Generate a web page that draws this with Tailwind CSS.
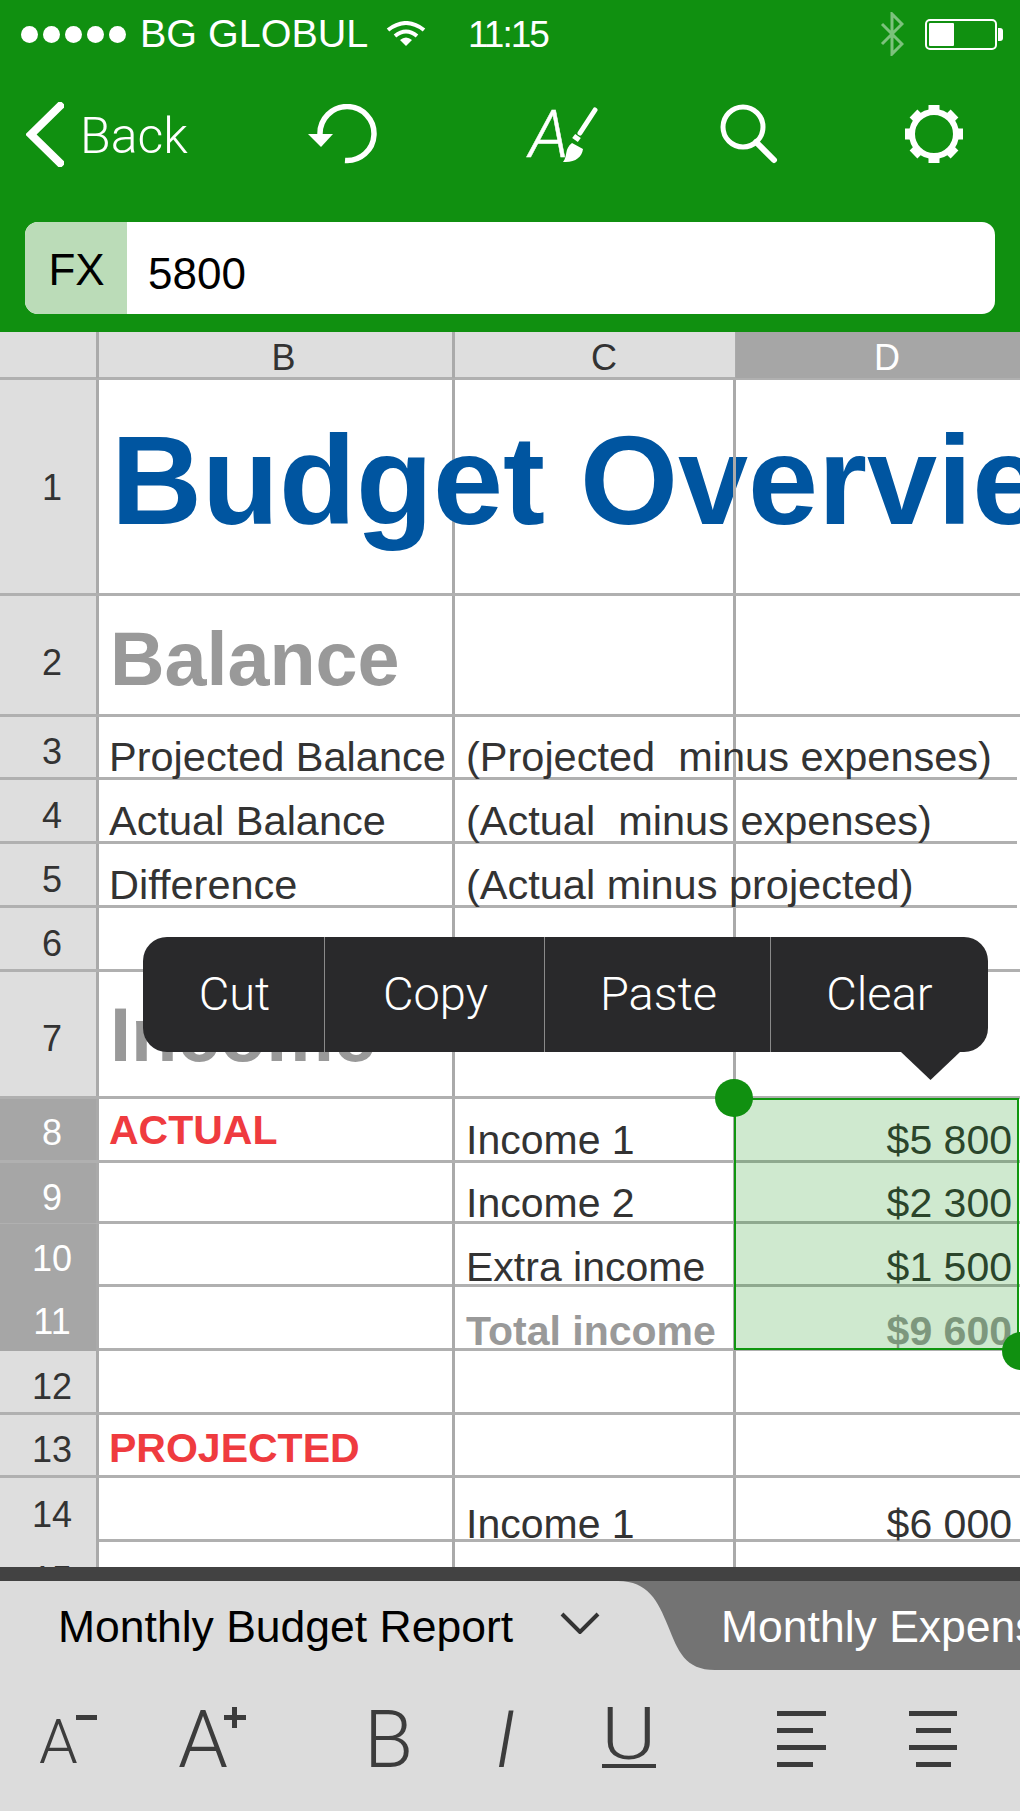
<!DOCTYPE html>
<html>
<head>
<meta charset="utf-8">
<script src="https://cdn.jsdelivr.net/npm/@tailwindcss/browser@4"></script>
</head>
<body class="m-0 bg-white">
<div class="relative w-[1020px] h-[1811px] overflow-hidden font-['Liberation_Sans',sans-serif] text-[#333]">

  <!-- green header -->
  <header class="h-[332px] bg-[#109010] flex flex-col text-white">
    <div class="h-[68px] flex items-center pl-[21px] pr-[23px]">
      <div class="flex gap-[5px]">
        <span class="w-[17px] h-[17px] rounded-full bg-white"></span>
        <span class="w-[17px] h-[17px] rounded-full bg-white"></span>
        <span class="w-[17px] h-[17px] rounded-full bg-white"></span>
        <span class="w-[17px] h-[17px] rounded-full bg-white"></span>
        <span class="w-[17px] h-[17px] rounded-full bg-white"></span>
      </div>
      <span class="ml-[14px] w-[246px] text-[39.5px] leading-none whitespace-nowrap">BG GLOBUL</span>
      <svg class="w-[40px] h-[26px]" viewBox="0 0 40 26" fill="none" stroke="white" stroke-width="4">
        <path d="M2 9 Q20 -5 38 9"/><path d="M9 15 Q20 6 31 15"/><path d="M20 25 L14 19 Q20 14 26 19 Z" fill="white" stroke="none"/>
      </svg>
      <span class="ml-[42px] text-[37px] tracking-[-2px] leading-none whitespace-nowrap">11:15</span>
      <svg class="ml-auto w-[24px] h-[44px] opacity-45" viewBox="0 0 24 44" fill="none" stroke="white" stroke-width="3">
        <path d="M2 12 L22 32 L12 42 L12 2 L22 12 L2 32"/>
      </svg>
      <div class="ml-[21px] w-[72px] h-[31px] border-2 border-white rounded-[5px] p-[2px] relative">
        <div class="w-[25px] h-full bg-white rounded-[1px]"></div>
        <span class="absolute -right-[8px] top-[7px] w-[5px] h-[13px] bg-white rounded-r-[3px]"></span>
      </div>
    </div>

    <nav class="relative h-[154px]">
      <svg class="absolute left-[26px] top-[34px] w-[38px] h-[65px]" viewBox="0 0 38 65" fill="none" stroke="white" stroke-width="8" stroke-linecap="square">
        <path d="M34 4 L5 32.5 L34 61"/>
      </svg>
      <span class="absolute left-[80px] top-[44px] text-[50px] leading-[48px] font-['Roboto',sans-serif] font-light">Back</span>
      <svg class="absolute left-[307px] top-[36px] w-[70px] h-[60px]" viewBox="0 0 70 60" fill="none" stroke="white" stroke-width="5.5">
        <path d="M38 56.5 A27 27 0 1 0 13 30"/>
        <path d="M1 30 L26 30 L14 43 Z" fill="white" stroke="none"/>
      </svg>
      <span class="absolute left-[529px] top-[32px] text-[66px] leading-[70px] italic font-['Roboto',sans-serif] font-light [-webkit-text-stroke:0.5px_white]">A</span>
      <svg class="absolute left-[555px] top-[38px] w-[44px] h-[58px]" viewBox="0 0 44 58" fill="white" stroke="none">
        <path d="M40 4 L25 27" stroke="white" stroke-width="5" stroke-linecap="round"/>
        <path d="M23 30 L20 34" stroke="white" stroke-width="7"/>
        <path d="M17 37 L28 43 C27 51 20 57 8 56 C13 50 9 43 17 37 Z"/>
      </svg>
      <svg class="absolute left-[720px] top-[36px] w-[58px] h-[60px]" viewBox="0 0 58 60" fill="none" stroke="white" stroke-width="5">
        <circle cx="23" cy="23" r="20"/><path d="M36 38 L54 56" stroke-width="6" stroke-linecap="round"/>
      </svg>
      <svg class="absolute left-[904px] top-[36px] w-[60px] h-[60px]" viewBox="0 0 60 60" fill="none" stroke="white">
        <circle cx="30" cy="30" r="22" stroke-width="6"/>
        <path stroke-width="11" d="M30 1 V8 M30 52 V59 M1 30 H8 M52 30 H59 M9.5 9.5 L14.5 14.5 M45.5 45.5 L50.5 50.5 M50.5 9.5 L45.5 14.5 M14.5 45.5 L9.5 50.5"/>
      </svg>
    </nav>

    <div class="mx-[25px] h-[92px] w-[970px] rounded-[13px] bg-white overflow-hidden flex text-black">
      <div class="w-[102px] bg-[#bbdcb8] flex items-center justify-center pl-[1px] pt-[3px] text-[44px]">FX</div>
      <div class="pl-[21px] flex items-center pt-[12px] text-[44px]">5800</div>
    </div>
  </header>

  <!-- spreadsheet -->
  <main class="relative h-[1235px] overflow-hidden text-[41px] leading-[40px]">
    <div class="h-[48px] grid grid-cols-[99px_356px_281px_1fr] bg-[#dedede] text-[36px] border-b-[3px] border-[#b0b0b0]">
      <div class="border-r-[3px] border-[#aaa]"></div>
      <div class="border-r-[3px] border-[#aaa] flex items-center justify-center pt-[6px] pl-[16px]">B</div>
      <div class="border-r-[1px] border-[#aaa] flex items-center justify-center pt-[6px] pl-[18px]">C</div>
      <div class="bg-[#a6a6a6] text-white flex items-center justify-center pt-[6px] pl-[18px]">D</div>
    </div>

    <div class="h-[216px] grid grid-cols-[99px_356px_281px_1fr] border-b-[3px] border-[#b0b0b0]">
      <div class="bg-[#dedede] border-r-[3px] border-[#aaa] flex items-center justify-center pt-[2px] pl-[8px] text-[36px]">1</div>
      <div class="border-r-[3px] border-[#aaa] pl-[12px] pt-[31px] text-[126px] leading-[140px] font-bold text-[#0055a0] whitespace-nowrap">Budget Overview</div>
      <div class="border-r-[3px] border-[#aaa]"></div>
      <div></div>
    </div>

    <div class="h-[121px] grid grid-cols-[99px_356px_281px_1fr] border-b-[3px] border-[#b0b0b0]">
      <div class="bg-[#dedede] border-r-[3px] border-[#aaa] flex items-center justify-center pt-[16px] pl-[8px] text-[36px]">2</div>
      <div class="border-r-[3px] border-[#aaa] pl-[11px] pt-[21px] text-[75.5px] leading-[84px] font-bold text-[#999] whitespace-nowrap">Balance</div>
      <div class="border-r-[3px] border-[#aaa]"></div>
      <div></div>
    </div>

    <div class="h-[63px] grid grid-cols-[99px_356px_281px_1fr] border-b-[3px] border-[#b0b0b0] mr-[3px] text-[41.5px]">
      <div class="bg-[#dedede] border-r-[3px] border-[#aaa] flex items-center justify-center pt-[10px] pl-[8px] text-[36px]">3</div>
      <div class="border-r-[3px] border-[#aaa] pl-[10px] pt-[20px] whitespace-nowrap">Projected Balance</div>
      <div class="border-r-[3px] border-[#aaa] pl-[11px] pt-[20px] whitespace-pre">(Projected  minus expenses)</div>
      <div></div>
    </div>

    <div class="h-[64px] grid grid-cols-[99px_356px_281px_1fr] border-b-[3px] border-[#b0b0b0] mr-[3px] text-[41.5px]">
      <div class="bg-[#dedede] border-r-[3px] border-[#aaa] flex items-center justify-center pt-[10px] pl-[8px] text-[36px]">4</div>
      <div class="border-r-[3px] border-[#aaa] pl-[10px] pt-[21px] whitespace-nowrap">Actual Balance</div>
      <div class="border-r-[3px] border-[#aaa] pl-[11px] pt-[21px] whitespace-pre">(Actual  minus expenses)</div>
      <div></div>
    </div>

    <div class="h-[64px] grid grid-cols-[99px_356px_281px_1fr] border-b-[3px] border-[#b0b0b0] mr-[3px] text-[41.5px]">
      <div class="bg-[#dedede] border-r-[3px] border-[#aaa] flex items-center justify-center pt-[10px] pl-[8px] text-[36px]">5</div>
      <div class="border-r-[3px] border-[#aaa] pl-[10px] pt-[21px] whitespace-nowrap">Difference</div>
      <div class="border-r-[3px] border-[#aaa] pl-[11px] pt-[21px] whitespace-pre">(Actual minus projected)</div>
      <div></div>
    </div>

    <div class="h-[64px] grid grid-cols-[99px_356px_281px_1fr] border-b-[3px] border-[#b0b0b0]">
      <div class="bg-[#dedede] border-r-[3px] border-[#aaa] flex items-center justify-center pt-[10px] pl-[8px] text-[36px]">6</div>
      <div class="border-r-[3px] border-[#aaa]"></div>
      <div class="border-r-[3px] border-[#aaa]"></div>
      <div></div>
    </div>

    <div class="h-[127px] grid grid-cols-[99px_356px_281px_1fr] border-b-[3px] border-[#b0b0b0]">
      <div class="bg-[#dedede] border-r-[3px] border-[#aaa] flex items-center justify-center pt-[10px] pl-[8px] text-[36px]">7</div>
      <div class="border-r-[3px] border-[#aaa] pl-[11px] pt-[21px] text-[76px] leading-[84px] font-bold text-[#999] whitespace-nowrap">Income</div>
      <div class="border-r-[3px] border-[#aaa]"></div>
      <div></div>
    </div>

    <div class="h-[64px] grid grid-cols-[99px_356px_281px_1fr] border-b-[3px] border-[#b0b0b0]">
      <div class="bg-[#a6a6a6] text-white border-r-[3px] border-[#aaa] flex items-center justify-center pt-[6px] pl-[8px] text-[36px]">8</div>
      <div class="border-r-[3px] border-[#aaa] pl-[10px] pt-[11px] font-bold text-[#ef3b3f] whitespace-nowrap">ACTUAL</div>
      <div class="border-r-[3px] border-[#aaa] pl-[11px] pt-[21px] whitespace-nowrap">Income 1</div>
      <div class="text-right pr-[8px] pt-[21px]">$5 800</div>
    </div>

    <div class="h-[61px] grid grid-cols-[99px_356px_281px_1fr] border-b-[3px] border-[#b0b0b0]">
      <div class="bg-[#a6a6a6] text-white border-r-[3px] border-[#aaa] flex items-center justify-center pt-[10px] pl-[8px] text-[36px]">9</div>
      <div class="border-r-[3px] border-[#aaa]"></div>
      <div class="border-r-[3px] border-[#aaa] pl-[11px] pt-[20px] whitespace-nowrap">Income 2</div>
      <div class="text-right pr-[8px] pt-[20px]">$2 300</div>
    </div>

    <div class="h-[63px] grid grid-cols-[99px_356px_281px_1fr] border-b-[3px] border-[#b0b0b0]">
      <div class="bg-[#a6a6a6] text-white border-r-[3px] border-[#aaa] flex items-center justify-center pt-[6px] pl-[8px] text-[36px]">10</div>
      <div class="border-r-[3px] border-[#aaa]"></div>
      <div class="border-r-[3px] border-[#aaa] pl-[11px] pt-[23px] whitespace-nowrap">Extra income</div>
      <div class="text-right pr-[8px] pt-[23px]">$1 500</div>
    </div>

    <div class="h-[64px] grid grid-cols-[99px_356px_281px_1fr] border-b-[3px] border-[#b0b0b0]">
      <div class="bg-[#a6a6a6] text-white border-r-[3px] border-[#aaa] flex items-center justify-center pt-[6px] pl-[8px] text-[36px]">11</div>
      <div class="border-r-[3px] border-[#aaa]"></div>
      <div class="border-r-[3px] border-[#aaa] pl-[11px] pt-[24px] font-bold text-[#999] whitespace-nowrap">Total income</div>
      <div class="text-right pr-[8px] pt-[24px] font-bold text-[#999]">$9 600</div>
    </div>

    <div class="h-[64px] grid grid-cols-[99px_356px_281px_1fr] border-b-[3px] border-[#b0b0b0]">
      <div class="bg-[#dedede] border-r-[3px] border-[#aaa] flex items-center justify-center pt-[10px] pl-[8px] text-[36px]">12</div>
      <div class="border-r-[3px] border-[#aaa]"></div>
      <div class="border-r-[3px] border-[#aaa]"></div>
      <div></div>
    </div>

    <div class="h-[63px] grid grid-cols-[99px_356px_281px_1fr] border-b-[3px] border-[#b0b0b0]">
      <div class="bg-[#dedede] border-r-[3px] border-[#aaa] flex items-center justify-center pt-[10px] pl-[8px] text-[36px]">13</div>
      <div class="border-r-[3px] border-[#aaa] pl-[10px] pt-[13px] font-bold text-[#ef3b3f] whitespace-nowrap">PROJECTED</div>
      <div class="border-r-[3px] border-[#aaa]"></div>
      <div></div>
    </div>

    <div class="h-[64px] grid grid-cols-[99px_356px_281px_1fr] border-b-[3px] border-[#b0b0b0]">
      <div class="bg-[#dedede] border-r-[3px] border-[#aaa] flex items-center justify-center pt-[8px] pl-[8px] text-[36px]">14</div>
      <div class="border-r-[3px] border-[#aaa]"></div>
      <div class="border-r-[3px] border-[#aaa] pl-[11px] pt-[26px] whitespace-nowrap">Income 1</div>
      <div class="text-right pr-[8px] pt-[26px]">$6 000</div>
    </div>

    <div class="h-[64px] grid grid-cols-[99px_356px_281px_1fr]">
      <div class="bg-[#dedede] border-r-[3px] border-[#aaa] flex items-start justify-center pt-[18px] pl-[8px] text-[36px]">15</div>
      <div class="border-r-[3px] border-[#aaa]"></div>
      <div class="border-r-[3px] border-[#aaa]"></div>
      <div></div>
    </div>

    <!-- selection overlay -->
    <div class="absolute left-[734px] top-[766px] w-[285px] h-[252px] border-[2.5px] border-[#0f960f] bg-[#109010]/20"></div>
    <div class="absolute left-[715px] top-[747px] w-[38px] h-[38px] rounded-full bg-[#109010]"></div>
    <div class="absolute left-[1002px] top-[1000px] w-[38px] h-[38px] rounded-full bg-[#109010]"></div>

    <!-- context menu -->
    <div class="absolute left-[143px] top-[605px] w-[845px] h-[115px] rounded-[24px] bg-[#29292b] flex text-white text-[47px] font-['Roboto',sans-serif] font-light">
      <div class="w-[182px] flex items-center justify-center pb-[1px] pl-[2px] border-r border-[#8a8a8a]">Cut</div>
      <div class="w-[220px] flex items-center justify-center pb-[1px] pl-[2px] border-r border-[#8a8a8a]">Copy</div>
      <div class="w-[226px] flex items-center justify-center pb-[1px] pl-[2px] border-r border-[#8a8a8a]">Paste</div>
      <div class="flex-1 flex items-center justify-center pb-[1px]">Clear</div>
    </div>
    <div class="absolute left-[901px] top-[720px] w-[59px] h-[28px] bg-[#29292b] [clip-path:polygon(0_0,100%_0,50%_100%)]"></div>
  </main>

  <!-- bottom bar -->
  <footer class="relative h-[244px] bg-[#dcdcdc] border-t-[14px] border-[#424242]">
    <svg class="absolute left-[600px] top-0 w-[420px] h-[89px]" viewBox="0 0 420 89">
      <path d="M18 0 H420 V89 H115 C85 89 78 70 68 45 C58 20 48 0 18 0 Z" fill="#737373"/>
    </svg>
    <div class="absolute left-[58px] top-[21px] text-[44.5px] leading-[50px] text-black whitespace-nowrap">Monthly Budget Report</div>
    <svg class="absolute left-[560px] top-[31px] w-[40px] h-[22px]" viewBox="0 0 40 22" fill="none" stroke="#333" stroke-width="4">
      <path d="M2 2 L20 20 L38 2"/>
    </svg>
    <div class="absolute left-[721px] top-[21px] text-[44.5px] leading-[50px] text-white whitespace-nowrap">Monthly Expenses</div>

    <div class="absolute left-0 top-[112px] w-full h-[90px] text-[#3c3c3c] font-['Roboto',sans-serif] font-light">
      <span class="absolute left-[39px] top-[18px] text-[62px] leading-[62px]">A</span>
      <span class="absolute left-[76px] top-[22px] w-[21px] h-[5px] bg-[#3c3c3c]"></span>
      <span class="absolute left-[178px] top-[7px] text-[80px] leading-[80px]">A</span>
      <span class="absolute left-[224px] top-[22px] w-[22px] h-[5px] bg-[#3c3c3c]"></span>
      <span class="absolute left-[232px] top-[14px] w-[5px] h-[21px] bg-[#3c3c3c]"></span>
      <span class="absolute left-[364px] top-[7px] text-[80px] leading-[80px]">B</span>
      <span class="absolute left-[495px] top-[7px] text-[80px] leading-[80px] italic">I</span>
      <span class="absolute left-[601px] top-[6px] text-[72px] leading-[72px] origin-left scale-x-[1.17]">U</span>
      <span class="absolute left-[602px] top-[71px] w-[54px] h-[4px] bg-[#3c3c3c]"></span>
      <div class="absolute left-[777px] top-[18px] w-[49px] h-[56px] flex flex-col justify-between items-start">
        <span class="block w-[49px] h-[5px] bg-[#3c3c3c]"></span>
        <span class="block w-[36px] h-[5px] bg-[#3c3c3c]"></span>
        <span class="block w-[49px] h-[5px] bg-[#3c3c3c]"></span>
        <span class="block w-[36px] h-[5px] bg-[#3c3c3c]"></span>
      </div>
      <div class="absolute left-[909px] top-[18px] w-[48px] h-[56px] flex flex-col justify-between items-center">
        <span class="block w-[48px] h-[5px] bg-[#3c3c3c]"></span>
        <span class="block w-[35px] h-[5px] bg-[#3c3c3c]"></span>
        <span class="block w-[48px] h-[5px] bg-[#3c3c3c]"></span>
        <span class="block w-[35px] h-[5px] bg-[#3c3c3c]"></span>
      </div>
    </div>
  </footer>
</div>
</body>
</html>
